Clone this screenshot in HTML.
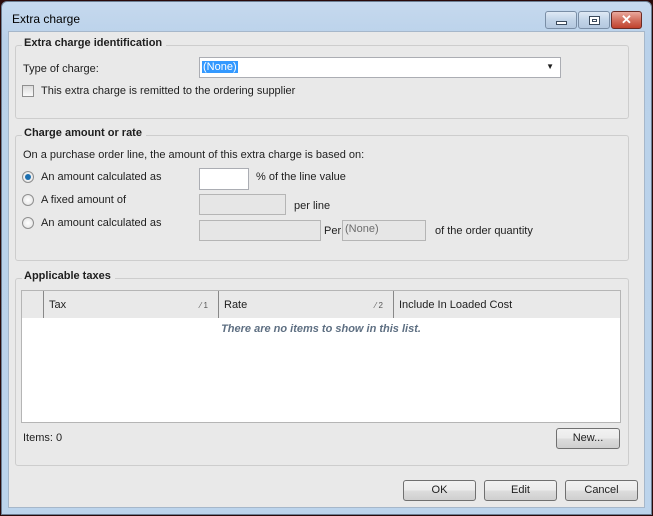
<!DOCTYPE html>
<html><head><meta charset="utf-8"><style>
*{box-sizing:border-box}
body{margin:0;width:653px;height:516px;background:#2a0a0a;font-family:"Liberation Sans",sans-serif;font-size:11px;color:#1e1e1e;position:relative;overflow:hidden}
.a{position:absolute}
#frame{left:1px;top:1px;width:651px;height:514px;background:linear-gradient(#c6d9ee,#b9d1ea 40px,#bcd4ec);border:1px solid #6d7f94;border-radius:6px 6px 0 0}
#content{left:8px;top:31px;width:637px;height:477px;background:#e9e9e9;border:1px solid #a6b7ca}
.grp{position:absolute;border:1px solid #cdcdcd;border-radius:3px}
.lg{position:absolute;top:-9px;left:6px;background:#e9e9e9;font-weight:bold;padding:0 4px 0 2px}
.tb{position:absolute;top:11px;height:18px;border:1px solid #7a8ea6;border-radius:3px;background:linear-gradient(#dfe9f5,#c2d4e8 50%,#b4c8df)}
.in{position:absolute;background:#fff;border:1px solid #abadb3}
.dis{position:absolute;background:#e6e6e6;border:1px solid #b5b5b5}
.rad{position:absolute;width:12px;height:12px;border-radius:50%;border:1px solid #8f8f8f;background:radial-gradient(#fff,#e0e0e0)}
.btn{position:absolute;height:21px;border:1px solid #707070;border-radius:3px;background:linear-gradient(#f2f2f2,#ebebeb 50%,#dddddd 51%,#cfcfcf);text-align:center;line-height:19px}
</style></head><body>
<div id="frame" class="a"></div>
<div class="a" style="left:12px;top:12px;font-size:12px;color:#000">Extra charge</div>
<div class="tb" style="left:545px;width:32px"><div class="a" style="left:10px;top:9px;width:11px;height:4px;border:1px solid #3b4a5c;background:#fff"></div></div>
<div class="tb" style="left:578px;width:32px"><div class="a" style="left:10px;top:4px;width:11px;height:9px;border:1px solid #3b4a5c;background:#fff"><div class="a" style="left:2px;top:2px;width:5px;height:3px;border:1px solid #3b4a5c"></div></div></div>
<div class="tb" style="left:611px;width:31px;border-color:#6b2b25;background:linear-gradient(#e9a99e,#d3705f 50%,#c0412d)"><div class="a" style="left:0;top:0;width:29px;text-align:center;color:#fff;font-weight:bold;font-size:13px;line-height:16px">✕</div></div>
<div id="content" class="a"></div>

<div class="grp" style="left:15px;top:45px;width:614px;height:74px"><div class="lg">Extra charge identification</div></div>
<div class="a" style="left:23px;top:63px">Type of charge:</div>
<div class="in" style="left:199px;top:57px;width:362px;height:21px"><span class="a" style="left:2px;top:3px;background:#3399ff;color:#fff;padding:0 1px">(None)</span><span class="a" style="right:6px;top:4px;font-size:8px">▼</span></div>
<div class="a" style="left:22px;top:85px;width:12px;height:12px;border:1px solid #8f8f8f;background:linear-gradient(#ddd,#fafafa)"></div>
<div class="a" style="left:41px;top:85px">This extra charge is remitted to the ordering supplier</div>

<div class="grp" style="left:15px;top:135px;width:614px;height:126px"><div class="lg">Charge amount or rate</div></div>
<div class="a" style="left:23px;top:149px">On a purchase order line, the amount of this extra charge is based on:</div>
<div class="rad" style="left:22px;top:171px"><div class="a" style="left:2px;top:2px;width:6px;height:6px;border-radius:50%;background:#1c6fb0"></div></div>
<div class="a" style="left:41px;top:171px">An amount calculated as</div>
<div class="in" style="left:199px;top:168px;width:50px;height:22px"></div>
<div class="a" style="left:256px;top:171px">% of the line value</div>
<div class="rad" style="left:22px;top:194px"></div>
<div class="a" style="left:41px;top:194px">A fixed amount of</div>
<div class="dis" style="left:199px;top:194px;width:87px;height:21px"></div>
<div class="a" style="left:294px;top:200px">per line</div>
<div class="rad" style="left:22px;top:217px"></div>
<div class="a" style="left:41px;top:217px">An amount calculated as</div>
<div class="dis" style="left:199px;top:220px;width:122px;height:21px"></div>
<div class="a" style="left:324px;top:225px">Per</div>
<div class="dis" style="left:342px;top:220px;width:84px;height:21px;color:#6d6d6d"><span class="a" style="left:2px;top:2px">(None)</span></div>
<div class="a" style="left:435px;top:225px">of the order quantity</div>

<div class="grp" style="left:15px;top:278px;width:614px;height:188px"><div class="lg">Applicable taxes</div></div>
<div class="a" style="left:21px;top:290px;width:600px;height:133px;background:#fff;border:1px solid #b5b5b5"></div>
<div class="a" style="left:22px;top:291px;width:598px;height:27px;background:#e9e9e9"></div>
<div class="a" style="left:43px;top:291px;width:1px;height:27px;background:#888"></div>
<div class="a" style="left:218px;top:291px;width:1px;height:27px;background:#888"></div>
<div class="a" style="left:393px;top:291px;width:1px;height:27px;background:#888"></div>
<div class="a" style="left:49px;top:299px">Tax</div>
<div class="a" style="left:200px;top:301px;font-size:8px;color:#555">⁄ 1</div>
<div class="a" style="left:224px;top:299px">Rate</div>
<div class="a" style="left:375px;top:301px;font-size:8px;color:#555">⁄ 2</div>
<div class="a" style="left:399px;top:299px">Include In Loaded Cost</div>
<div class="a" style="left:22px;top:323px;width:598px;text-align:center;font-style:italic;font-weight:bold;color:#5e6f82">There are no items to show in this list.</div>
<div class="a" style="left:23px;top:432px">Items: 0</div>
<div class="btn" style="left:556px;top:428px;width:64px">New...</div>

<div class="btn" style="left:403px;top:480px;width:73px">OK</div>
<div class="btn" style="left:484px;top:480px;width:73px">Edit</div>
<div class="btn" style="left:565px;top:480px;width:73px">Cancel</div>
</body></html>
